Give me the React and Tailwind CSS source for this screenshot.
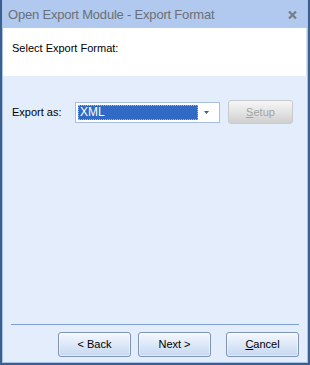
import React from 'react';

const WinButton = ({ children, disabled }) => (
  <button
    disabled={disabled}
    className={
      disabled
        ? 'w-[65px] h-[24px] rounded-[3px] border border-[#c9cbcf] bg-gradient-to-b from-[#f6f6f6] via-[#e4e4e4] to-[#cfcfcf] text-[#a3a3a3] text-[11px] flex items-center justify-center'
        : 'w-[73px] h-[25px] rounded-[3px] border border-[#7f93b8] bg-gradient-to-b from-[#f4f8fe] via-[#dde8f8] to-[#c5d7f1] text-black text-[11px] flex items-center justify-center shadow-[inset_0_0_0_1px_#ffffff80]'
    }
  >
    {children}
  </button>
);

const App = () => {
  return (
    <div
      className="w-[310px] h-[365px] flex flex-col bg-[#3c5e90] p-[2px] pt-0"
      style={{ fontFamily: '"Liberation Sans", Arial, sans-serif' }}
    >
      <div className="flex-1 flex flex-col border-l border-r border-b border-[#a9c2e8] bg-[#e3edfc]">
        <div className="h-[28px] bg-[#b1c9ee] flex items-center justify-between pl-[5px] pr-[10px] border-t border-[#b1c9ee]">
          <span className="text-[13px] text-[#6b7078] tracking-[-0.2px] pt-[1px]">
            Open Export Module - Export Format
          </span>
          <svg width="9" height="8" viewBox="0 0 9 8">
            <path d="M1 0.5 L8 7.5 M8 0.5 L1 7.5" stroke="#787c84" strokeWidth="2.2" />
          </svg>
        </div>
        <div className="h-[48px] bg-white border-r border-[#d4e0f2] pl-[9px] pt-[7px]">
          <span className="text-[11px] text-black">Select Export Format:</span>
        </div>
        <div className="flex-1 flex flex-col px-[9px]">
          <div className="flex items-center mt-[24px]">
            <span className="text-[11px] text-black w-[63px]">Export as:</span>
            <div className="w-[145px] h-[21px] bg-white border border-[#a7bedf] flex items-center pl-[2px] pr-[4px]">
              <div className="flex-1 h-[15px] bg-[#316ac5] border border-dotted border-[#f0b040] flex items-center pl-[1px]">
                <span className="text-[12px] text-white leading-none">XML</span>
              </div>
              <svg width="17" height="15" viewBox="0 0 17 15">
                <path d="M6 6 L11 6 L8.5 9 Z" fill="#4b5a78" />
              </svg>
            </div>
            <div className="ml-[8px]">
              <WinButton disabled>
                <span><span className="underline">S</span>etup</span>
              </WinButton>
            </div>
          </div>
          <div className="flex-1" />
          <div className="h-px bg-[#7ea0d3] -mx-[1px]" />
          <div className="flex justify-end gap-[7px] mt-[7px] mb-[5px] -mr-[1px]">
            <WinButton>&lt; Back</WinButton>
            <div className="mr-[8px]">
              <WinButton>Next &gt;</WinButton>
            </div>
            <WinButton>
              <span><span className="underline">C</span>ancel</span>
            </WinButton>
          </div>
        </div>
      </div>
    </div>
  );
};

export default App;
